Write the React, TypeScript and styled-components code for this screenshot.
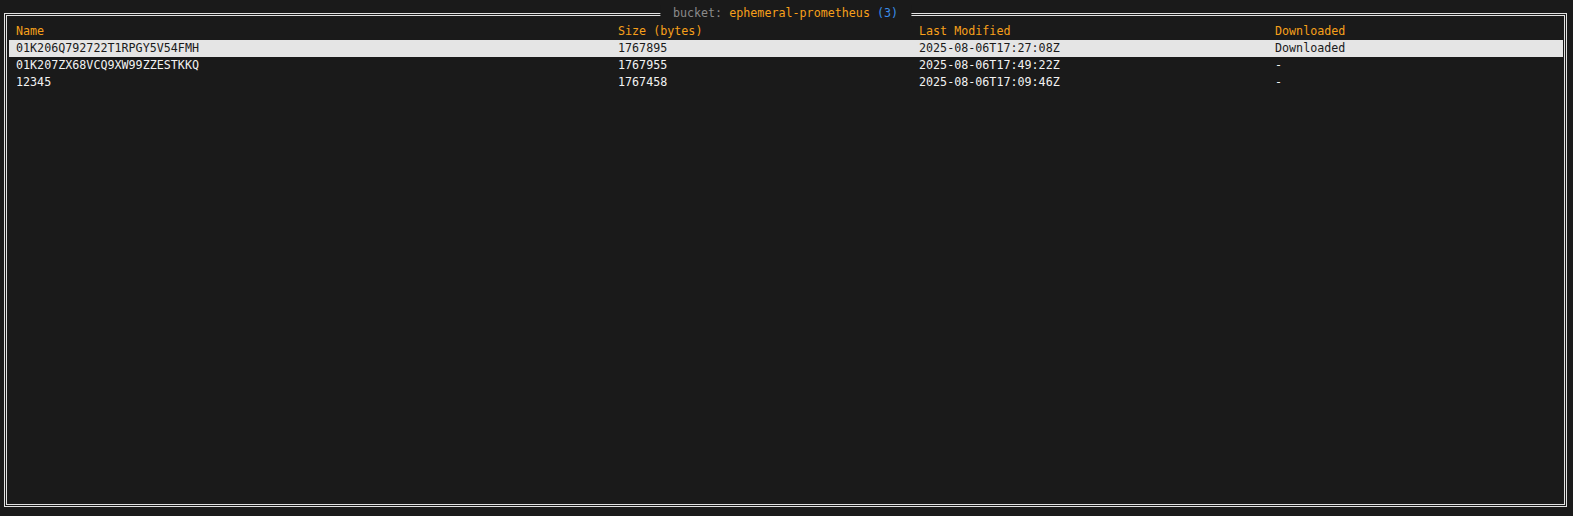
import React from "react";
import styled, { createGlobalStyle } from "styled-components";

const GlobalStyle = createGlobalStyle`
  html, body {
    margin: 0;
    padding: 0;
    background: #1a1a1a;
  }
  body {
    font-family: "DejaVu Sans Mono", "Liberation Mono", monospace;
    font-size: 11.7px;
    color: #f2f2f2;
  }
`;

const Screen = styled.div`
  width: 1573px;
  height: 516px;
  box-sizing: border-box;
  padding: 13px 6px 9px 4px;
  background: #1a1a1a;
  display: flex;
`;

const Frame = styled.section`
  position: relative;
  flex: 1;
  border: 3px double #e2e2e2;
  padding: 7px 1px 0 2px;
  display: flex;
  flex-direction: column;
`;

const Title = styled.div`
  position: absolute;
  top: -11px;
  left: 50%;
  transform: translateX(-50%);
  padding: 0 13px;
  background: #1a1a1a;
  line-height: 17px;
  white-space: pre;
`;

const Muted = styled.span`
  color: #8a8a8a;
`;

const Accent = styled.span`
  color: #f7a01a;
`;

const Count = styled.span`
  color: #3b8eea;
`;

const Row = styled.div<{ $header?: boolean; $selected?: boolean }>`
  display: grid;
  grid-template-columns: 602px 301px 356px 1fr;
  height: 17px;
  line-height: 17px;
  padding-left: 7px;
  white-space: pre;
  color: ${(p) => (p.$header ? "#f7a01a" : p.$selected ? "#1a1a1a" : "#f2f2f2")};
  background: ${(p) => (p.$selected ? "#e5e5e5" : "transparent")};
`;

const Cell = styled.span`
  overflow: hidden;
`;

type Obj = { name: string; size: string; modified: string; downloaded: string };

const objects: Obj[] = [
  { name: "01K206Q792722T1RPGY5V54FMH", size: "1767895", modified: "2025-08-06T17:27:08Z", downloaded: "Downloaded" },
  { name: "01K207ZX68VCQ9XW99ZZESTKKQ", size: "1767955", modified: "2025-08-06T17:49:22Z", downloaded: "-" },
  { name: "12345", size: "1767458", modified: "2025-08-06T17:09:46Z", downloaded: "-" },
];

export default function App() {
  return (
    <>
      <GlobalStyle />
      <Screen>
        <Frame>
          <Title>
            <Muted>bucket: </Muted>
            <Accent>ephemeral-prometheus</Accent> <Count>(3)</Count>
          </Title>
          <Row $header>
            <Cell>Name</Cell>
            <Cell>Size (bytes)</Cell>
            <Cell>Last Modified</Cell>
            <Cell>Downloaded</Cell>
          </Row>
          {objects.map((o, i) => (
            <Row key={o.name} $selected={i === 0}>
              <Cell>{o.name}</Cell>
              <Cell>{o.size}</Cell>
              <Cell>{o.modified}</Cell>
              <Cell>{o.downloaded}</Cell>
            </Row>
          ))}
        </Frame>
      </Screen>
    </>
  );
}
